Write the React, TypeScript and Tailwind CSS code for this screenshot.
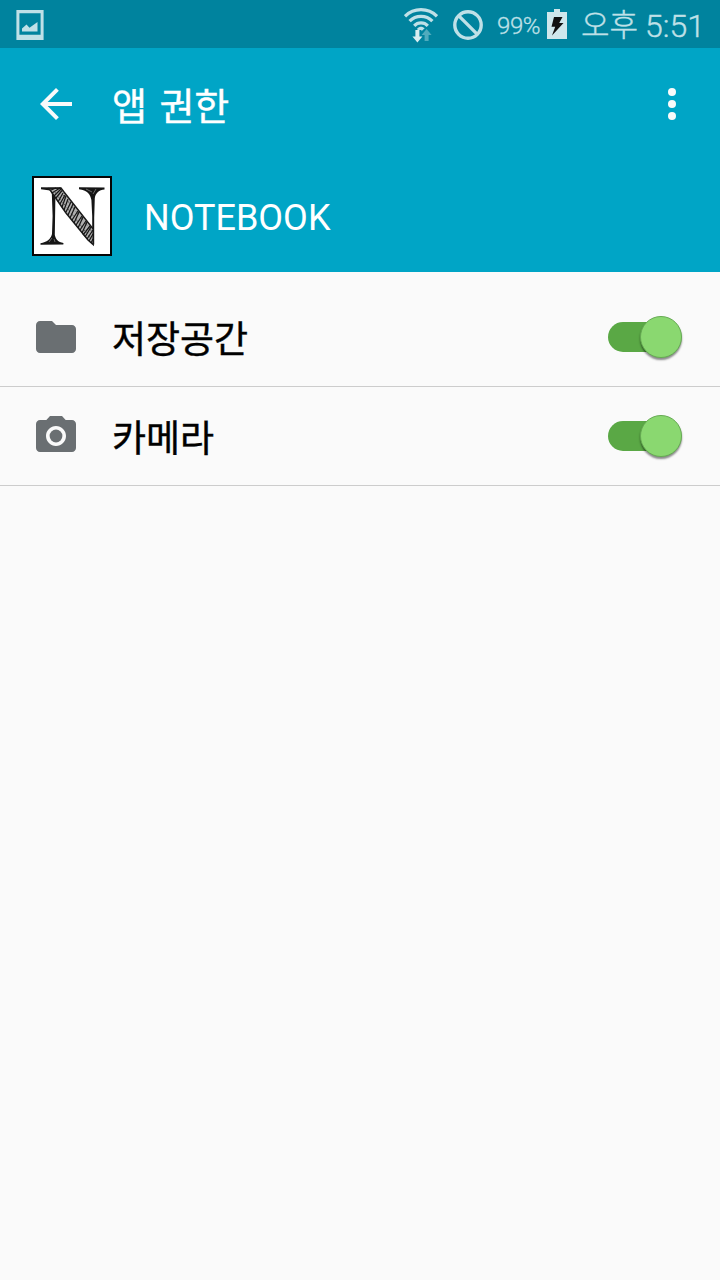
const korean = "font-['Roboto','Noto_Sans_CJK_KR',sans-serif]";

function PictureIcon() {
  return (
    <svg width="28" height="30" viewBox="0 0 28 30" fill="#bfe0e7">
      <path fillRule="evenodd" d="M.4 0H27.6V30H.4ZM3.4 3.2V24.8H24.6V3.2Z" />
      <path d="M6 21.5V18.5L10.5 14.5L13.5 17.8L21.5 12V21.5Z" />
    </svg>
  );
}

function WifiIcon() {
  return (
    <svg width="34" height="36" viewBox="0 0 34 36" fill="none">
      <g stroke="#bfe0e7" strokeWidth="3.2">
        <path d="M1 8.3C9.8 -0.5 24.2 -0.5 33 8.3" />
        <path d="M5.6 13.2C11.8 6.8 22.2 6.8 28.4 13.2" />
        <path d="M10.2 17.8C13.9 14 20.1 14 23.8 17.8" />
      </g>
      <path d="M13.3 20.3C15.3 18.1 18.7 18.1 20.7 20.3L17.5 23.2V22H13.5Z" fill="#bfe0e7" />
      <path d="M11.4 22H15.4V28.6H18.4L13.4 34.6L8.4 28.6H11.4Z" fill="#d8edf1" />
      <path d="M20.6 33V27H17.6L22.6 21L27.6 27H24.6V33Z" fill="#4fabbd" />
    </svg>
  );
}

function BlockedIcon() {
  return (
    <svg width="30" height="30" viewBox="0 0 30 30" fill="none" stroke="#bfe0e7" strokeWidth="3.4">
      <circle cx="15" cy="15" r="13.2" />
      <path d="M5.6 5.6L24.4 24.4" />
    </svg>
  );
}

function BatteryIcon() {
  return (
    <svg width="20" height="30" viewBox="0 0 20 30">
      <path d="M0 3H7V0H13V3H20V30H0Z" fill="#cfe7ec" />
      <path d="M7 8H15.5L12.2 14H16.5L5 26.5L8.2 17.8H4.5Z" fill="#111" />
    </svg>
  );
}

function NotebookLogo() {
  return (
    <svg width="80" height="80" viewBox="0 0 80 80">
      <rect x="1" y="1" width="78" height="78" fill="#fff" stroke="#050505" strokeWidth="2" />
      <g fill="#151515">
        <path d="M9 11.3L29 11.6L28.5 13.4L20 14.8L9 13.2Z" />
        <path d="M19.8 17L23.4 20L22.8 59C23.8 63.5 26 66 31.5 67L31.3 68.6L8.5 68.8V67.2C15 66.2 18.6 63.5 20 58L20.6 40Z" />
        <path d="M47 11.2L72.5 11.4V13.6C67 14 63.8 17 62.8 22L62.2 42V68.5L60.2 67L60.2 40L59.4 24C58.4 18 55 14.2 47 13.2Z" />
      </g>
      <path d="M17 12.5L29 12L32 16L61.2 53V68.5L56 64L34 37Z" fill="#b0b0b0" stroke="#1a1a1a" strokeWidth="1.5" />
      <path
        d="M19 14L24 12M20 17L28 12M22 20L29 13M24 22L30 14.5M26 26L31 17M28 28L33 19M30 31L34 20M32 34L36 23M34 36L39 26M36 39L41 28M38 42L43 31M40 44L46 35M42 47L47 36M44 49L50 40M46 52L51 41M48 54L54 45M50 57L55 46M51 59L58 50M53 61L59 51M55 63L61 54M57 65L61 58M59 67L61 63"
        stroke="#141414"
        strokeWidth="1.25"
      />
      <path d="M22 15L60 64M31 19L61 57" stroke="#333" strokeWidth=".7" strokeDasharray="4 3" />
      <g stroke="#fff" strokeWidth=".6" opacity=".6">
        <path d="M17 66L20 62M23 66L22 63M54 13L60 16M64 13L61 18" />
      </g>
    </svg>
  );
}

function FolderIcon() {
  return (
    <svg width="48" height="48" viewBox="0 0 24 24" fill="#6a6f72">
      <path d="M10 4H4c-1.1 0-1.99.9-1.99 2L2 18c0 1.1.9 2 2 2h16c1.1 0 2-.9 2-2V8c0-1.1-.9-2-2-2h-8l-2-2z" />
    </svg>
  );
}

function CameraIcon() {
  return (
    <svg width="48" height="48" viewBox="0 0 24 24" fill="#6a6f72">
      <circle cx="12" cy="12" r="3.2" />
      <path d="M9 2L7.17 4H4c-1.1 0-2 .9-2 2v12c0 1.1.9 2 2 2h16c1.1 0 2-.9 2-2V6c0-1.1-.9-2-2-2h-3.17L15 2H9zm3 15c-2.76 0-5-2.24-5-5s2.24-5 5-5 5 2.24 5 5-2.24 5-5 5z" />
    </svg>
  );
}

function Toggle() {
  return (
    <div role="switch" aria-checked="true" className="flex h-[30px] w-[74px] items-center justify-end rounded-l-full bg-linear-to-r from-[#5aa845] from-[52px] to-transparent to-[52px]">
      <div className="size-[42px] shrink-0 rounded-full border border-[#66ab53] bg-[#8ad870] shadow-[0_2px_2px_rgba(0,0,0,0.45)]" />
    </div>
  );
}

function PermissionRow({ icon, label }: { icon: React.ReactNode; label: string }) {
  return (
    <div className="flex h-[99px] items-center border-b border-[#cccccc] pr-[38px] pl-8">
      {icon}
      <span className="ml-8 flex-1 pt-[7px] text-[37px] leading-[48px] text-black [-webkit-text-stroke:0.4px_#000]">{label}</span>
      <Toggle />
    </div>
  );
}

export default function App() {
  return (
    <div className={`flex h-[1280px] w-[720px] flex-col bg-[#fafafa] ${korean}`}>
      <div className="flex h-12 items-center bg-[#00839e] pr-[15px] pl-4 text-[#bfe0e7]">
        <div className="pt-0.5"><PictureIcon /></div>
        <div className="ml-auto flex items-center">
          <div className="pt-[3px]"><WifiIcon /></div>
          <div className="ml-[15px] pt-0.5"><BlockedIcon /></div>
          <span className="ml-[14px] w-[44px] pt-[3px] text-[24px] leading-8 font-light tracking-[-0.4px] whitespace-nowrap [-webkit-text-stroke:0.3px_#bfe0e7]">99%</span>
          <div className="ml-[6px]"><BatteryIcon /></div>
          <span className="ml-[14px] w-[56px] pt-[3px] text-[31px] leading-8 font-light whitespace-nowrap [-webkit-text-stroke:0.4px_#bfe0e7]">오후</span>
          <span className="ml-[8px] pt-[3px] text-[32px] leading-10 font-light [-webkit-text-stroke:0.4px_#bfe0e7]">5:51</span>
        </div>
      </div>
      <header className="h-56 bg-[#00a5c6] text-white">
        <div className="flex h-28 items-center pr-[42px] pl-8">
          <svg width="48" height="48" viewBox="0 0 24 24" fill="#fafafa">
            <path d="M20 11H7.83l5.59-5.59L12 4l-8 8 8 8 1.41-1.41L7.83 13H20v-2z" />
          </svg>
          <h1 className="ml-8 flex-1 pt-[6px] text-[38px] leading-[52px] [word-spacing:3px] [-webkit-text-stroke:0.4px_#fff]">앱 권한</h1>
          <svg width="12" height="32" viewBox="0 0 12 32" fill="#fafafa">
            <circle cx="6" cy="4" r="4" />
            <circle cx="6" cy="16" r="4" />
            <circle cx="6" cy="28" r="4" />
          </svg>
        </div>
        <div className="flex items-center px-8 pt-4">
          <NotebookLogo />
          <span className="ml-8 pt-1 text-[36px] leading-[44px]">NOTEBOOK</span>
        </div>
      </header>
      <main className="flex-1 pt-4">
        <PermissionRow icon={<FolderIcon />} label="저장공간" />
        <PermissionRow icon={<CameraIcon />} label="카메라" />
      </main>
    </div>
  );
}
